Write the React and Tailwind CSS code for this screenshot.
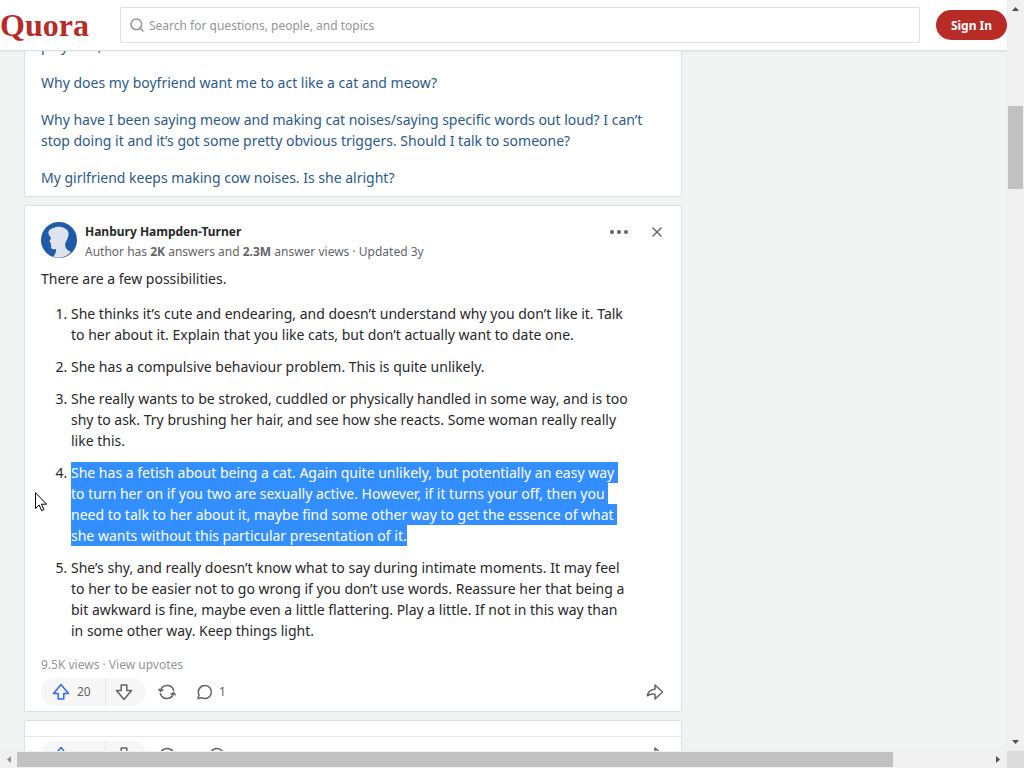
import { useState } from 'react';
import { Search, X } from 'lucide-react';

const QUESTIONS = [
  ['playtime,'],
  ['Why does my boyfriend want me to act like a cat and meow?'],
  [
    'Why have I been saying meow and making cat noises/saying specific words out loud? I can’t',
    'stop doing it and it’s got some pretty obvious triggers. Should I talk to someone?',
  ],
  ['My girlfriend keeps making cow noises. Is she alright?'],
];

const POINTS = [
  {
    lines: [
      'She thinks it’s cute and endearing, and doesn’t understand why you don’t like it. Talk',
      'to her about it. Explain that you like cats, but don’t actually want to date one.',
    ],
  },
  { lines: ['She has a compulsive behaviour problem. This is quite unlikely.'] },
  {
    lines: [
      'She really wants to be stroked, cuddled or physically handled in some way, and is too',
      'shy to ask. Try brushing her hair, and see how she reacts. Some woman really really',
      'like this.',
    ],
  },
  {
    selected: true,
    lines: [
      'She has a fetish about being a cat. Again quite unlikely, but potentially an easy way ',
      'to turn her on if you two are sexually active. However, if it turns your off, then you ',
      'need to talk to her about it, maybe find some other way to get the essence of what ',
      'she wants without this particular presentation of it.',
    ],
  },
  {
    lines: [
      'She’s shy, and really doesn’t know what to say during intimate moments. It may feel',
      'to her to be easier not to go wrong if you don’t use words. Reassure her that being a',
      'bit awkward is fine, maybe even a little flattering. Play a little. If not in this way than',
      'in some other way. Keep things light.',
    ],
  },
];

function UpArrow({ className }) {
  return (
    <svg className={className} width="24" height="24" viewBox="0 0 24 24" fill="none" stroke="currentColor" strokeWidth="1.5" strokeLinejoin="round">
      <path d="M12 4.500 4.500 13.500h4.700V19h5.600v-5.500h4.700z" />
    </svg>
  );
}

function RepostIcon() {
  return (
    <svg width="24" height="24" viewBox="0 0 24 24" fill="none" stroke="currentColor" strokeWidth="1.5" strokeLinecap="round" strokeLinejoin="round">
      <path d="M5.500 11A6.800 6.800 0 0 1 18.700 10.500M18.500 13A6.800 6.800 0 0 1 5.300 13.500" />
      <path d="M3.800 9.200l1.700 2 2.400-1.200M20.200 14.800l-1.700-2-2.400 1.200" />
    </svg>
  );
}

function CommentIcon() {
  return (
    <svg width="24" height="24" viewBox="0 0 24 24" fill="none" stroke="currentColor" strokeWidth="1.5" strokeLinejoin="round">
      <path d="M12 5.500a6.500 6.500 0 1 1-3.200 12.200L5 18.600l1-3.800A6.500 6.500 0 0 1 12 5.500z" />
    </svg>
  );
}

function ShareIcon() {
  return (
    <svg width="24" height="24" viewBox="0 0 24 24" fill="none" stroke="currentColor" strokeWidth="1.5" strokeLinejoin="round">
      <path d="M12 5v4.300C7.500 9.800 5 12 4.300 15.800c2.200-1.600 4.700-2 7.700-1.600V19l7.500-7z" />
    </svg>
  );
}

function Avatar() {
  return (
    <svg className="shrink-0" width="36" height="36" viewBox="0 0 36 36" aria-hidden="true">
      <circle cx="18" cy="18" r="18" fill="#1e5ca8" />
      <path
        d="M7.500 11.500C6.800 8.500 10 6.500 12.500 6c3-1.800 9-1.500 11.500.5 3.500 1.500 4.300 5 3 8.500-.5 2.500-2.500 4.500-2.800 7-.2 2.500.5 4.500 2.300 6 1.200.8 2.500 1.200 3.500 2A18 18 0 0 1 12 35c2-2.300 3.300-5 3.200-8-2 .4-4.700.6-5-1-.2-1.200.3-2.200-.1-3-.6-.8.1-1.500-.4-2.300-.7-.3-1.500-.7-1.200-1.400.7-1.300 1.400-2.300 1.200-3.800-.6-1.300-1.700-2-2.200-4z"
        fill="#dfe3ee"
      />
    </svg>
  );
}

function ActionBar({ votes, comments }) {
  return (
    <div className="flex items-center text-[#636466]">
      <div className="flex h-7 items-center rounded-full bg-[#f7f7f8]">
        <button className="flex h-7 w-16 items-center gap-1 pl-2 text-xs" aria-label="Upvote">
          <UpArrow className="text-[#2e69ff]" />
          {votes}
        </button>
        <div className="h-7 w-px bg-[#e6e7e8]" />
        <button className="flex h-7 w-10 items-center pl-1.5" aria-label="Downvote">
          <UpArrow className="rotate-180" />
        </button>
      </div>
      <button className="ml-[9px]" aria-label="Share to feed">
        <RepostIcon />
      </button>
      <button className={`flex h-7 items-center gap-0.5 text-xs ${comments ? 'ml-3.5' : 'ml-[26px]'}`} aria-label="Comments">
        <CommentIcon />
        {comments}
      </button>
      <button className="-mr-0.5 ml-auto" aria-label="Share">
        <ShareIcon />
      </button>
    </div>
  );
}

function Header() {
  const [query, setQuery] = useState('');

  return (
    <header className="z-10 flex h-[51px] shrink-0 items-center border-b border-[#dee0e1] bg-white shadow-xs">
      <a href="#" className="w-[88px] font-['Liberation_Serif',serif] text-[32px] leading-8 font-bold text-[#b92b27]">
        Quora
      </a>
      <label className="ml-8 flex h-9 flex-1 items-center gap-1 rounded-xs border border-[#dee0e1] px-2 text-[#939598]">
        <Search size={16} strokeWidth={2.25} />
        <input
          value={query}
          onChange={(e) => setQuery(e.target.value)}
          aria-label="Search"
          placeholder="Search for questions, people, and topics"
          className="flex-1 pt-0.5 text-xs outline-none placeholder:text-[#939598]"
        />
      </label>
      <button className="ml-4 h-[30px] w-[71px] rounded-full bg-[#b92b27] pt-0.5 text-xs font-bold text-white">Sign In</button>
    </header>
  );
}

function Lines({ lines, className }) {
  return lines.map((line) => (
    <span key={line} className="block whitespace-pre">
      <span className={className}>{line}</span>
    </span>
  ));
}

function Answer() {
  return (
    <article className="rounded-xs border border-[#dee0e1] bg-white px-4 pt-4 pb-[5px]">
      <div className="flex items-start gap-2">
        <Avatar />
        <div className="flex-1 text-xs leading-5">
          <a href="#" className="block font-bold text-[#282829]">Hanbury Hampden-Turner</a>
          <p className="text-[#636466]">
            Author has <b>2K</b> answers and <b>2.3M</b> answer views · Updated 3y
          </p>
        </div>
        <div className="flex items-center gap-5 text-[#636466]">
          <button aria-label="More">
            <svg width="20" height="20" viewBox="0 0 20 20" fill="currentColor">
              <circle cx="3" cy="10" r="2" />
              <circle cx="10" cy="10" r="2" />
              <circle cx="17" cy="10" r="2" />
            </svg>
          </button>
          <button aria-label="Hide">
            <X size={16} strokeWidth={2.25} />
          </button>
        </div>
      </div>

      <div className="pt-1.5 text-sm leading-[21px] text-[#282829]">
        <p>There are a few possibilities.</p>
        <ol className="mt-3.5 list-decimal space-y-[11px] pl-[30px]">
          {POINTS.map(({ lines, selected }) => (
            <li key={lines[0]}>
              <Lines lines={lines} className={selected ? 'inline-block bg-[#338fff] text-white' : ''} />
            </li>
          ))}
        </ol>
      </div>

      <p className="mt-[15px] mb-1 text-xs leading-[18px] text-[#939598]">
        9.5K views · <a href="#">View upvotes</a>
      </p>
      <ActionBar votes={20} comments={1} />
    </article>
  );
}

function Arrow({ className }) {
  return (
    <svg className={className} width="17" height="17" viewBox="0 0 17 17" fill="#505050" aria-hidden="true">
      <path d="M5 11h7L8.500 7z" />
    </svg>
  );
}

export default function App() {
  return (
    <div className="relative flex h-screen flex-col overflow-hidden bg-[#f1f2f2] font-['Noto_Sans','Open_Sans',sans-serif]">
      <div className="flex min-h-0 flex-1">
        <div className="flex min-w-0 flex-1 flex-col">
          <Header />
          <main className="min-h-0 flex-1 overflow-hidden pl-6">
            <div className="flex max-w-[658px] flex-col gap-2">
              <section className="rounded-b-xs border border-t-0 border-[#dee0e1] bg-white px-4 pb-2">
                <ul className="-mt-4 space-y-4 text-sm leading-[21px] text-[#2b5a8c]">
                  {QUESTIONS.map((lines) => (
                    <li key={lines[0]}>
                      <a href="#" className="block">
                        <Lines lines={lines} />
                      </a>
                    </li>
                  ))}
                </ul>
              </section>
              <Answer />
              <article className="rounded-xs border border-[#dee0e1] bg-white pt-[15px]">
                <div className="border-t border-[#e6e7e8] px-4 pt-1">
                  <ActionBar />
                </div>
              </article>
            </div>
          </main>
        </div>

        {/* vertical scrollbar */}
        <div className="flex w-[17px] flex-col bg-[#f0f0f0]">
          <Arrow />
          <div className="flex flex-1 flex-col px-px">
            <div className="basis-[12.400%]" />
            <div className="basis-[11.600%] bg-[#c1c1c1]" />
          </div>
          <Arrow className="rotate-180" />
        </div>
      </div>

      {/* horizontal scrollbar */}
      <div className="flex h-[17px] shrink-0 bg-[#f0f0f0]">
        <Arrow className="-rotate-90 opacity-60" />
        <div className="flex flex-1 py-px">
          <div className="basis-[90%] bg-[#c1c1c1]" />
        </div>
        <Arrow className="rotate-90" />
        <div className="w-[17px] bg-[#dcdcdc]" />
      </div>

      {/* mouse pointer */}
      <svg className="pointer-events-none absolute top-[492px] left-[35px]" width="13" height="20" viewBox="0 0 13 20" aria-hidden="true">
        <path d="M.5.700v15.800l3.700-3.500 2.400 5.700 2.300-1-2.400-5.500h5.100z" fill="#fff" stroke="#000" />
      </svg>
    </div>
  );
}
